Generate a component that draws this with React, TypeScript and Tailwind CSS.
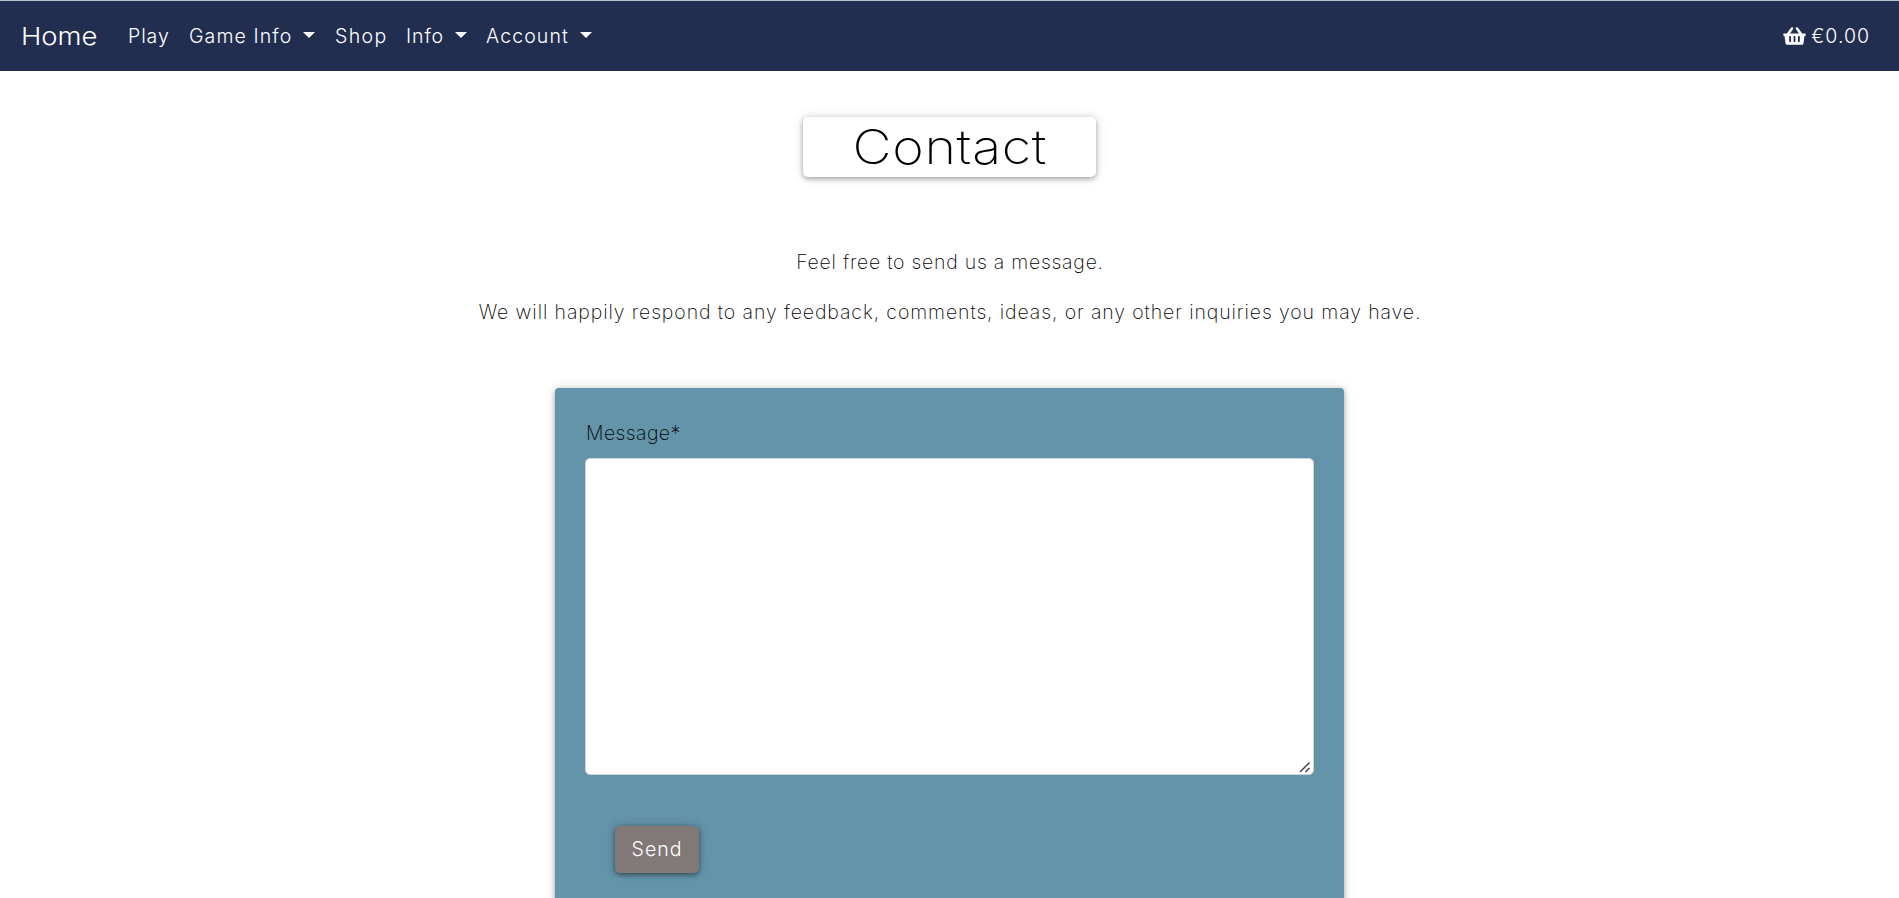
import { FaShoppingBasket } from "react-icons/fa";

function Caret() {
  return <span className="mb-[3px] ml-[11px] border-x-[6px] border-t-[6px] border-x-transparent border-t-white" />;
}

function NavItem({ label, width, spacing, menu }: { label: string; width: string; spacing: string; menu?: boolean }) {
  return (
    <a href="#" className={`flex shrink-0 items-center ${width}`}>
      <span className={`pt-[2px] whitespace-nowrap ${spacing}`}>{label}</span>
      {menu && <Caret />}
    </a>
  );
}

export default function App() {
  return (
    <div className="h-[898px] overflow-hidden bg-white font-['Inter',sans-serif] text-[19.5px] font-extralight text-black">
      <nav className="flex h-[71px] items-center border-t border-[#b4c3d4] bg-[#222e50] pr-[29px] pl-[21px] font-light text-white">
        <a href="#" className="w-[107px] shrink-0 text-[24.5px]">
          <span className="inline-block origin-left scale-x-[1.12]">Home</span>
        </a>
        <NavItem label="Play" width="w-[61px]" spacing="tracking-[0.9px]" />
        <NavItem label="Game Info" width="w-[146px]" spacing="tracking-[1.1px]" menu />
        <NavItem label="Shop" width="w-[71px]" spacing="tracking-[1.4px]" />
        <NavItem label="Info" width="w-[80px]" spacing="tracking-[0.9px]" menu />
        <NavItem label="Account" width="w-[110px]" spacing="tracking-[1.1px]" menu />
        <a href="#" className="ml-auto flex items-center gap-[5px]">
          <FaShoppingBasket className="h-[20px] w-[23px]" />
          <span className="pt-[2px] tracking-[1px]">€0.00</span>
        </a>
      </nav>
      <main className="flex flex-col items-center">
        <h1 className="mt-[46px] flex h-[60px] w-[293px] items-center justify-center rounded-[5px] text-[48px] tracking-[0.6px] shadow-[0_2px_5px_rgba(0,0,0,0.3),0_0_12px_rgba(0,0,0,0.14)]">
          <span className="inline-block scale-x-[1.12]">Contact</span>
        </h1>
        <p className="mt-[70px] h-[30px] pl-px leading-[30px] tracking-[0.75px]">Feel free to send us a message.</p>
        <p className="mt-[20px] h-[30px] pl-px leading-[30px] tracking-[0.9px]">
          We will happily respond to any feedback, comments, ideas, or any other inquiries you may have.
        </p>
        <form className="mt-[61px] h-[540px] w-[789px] rounded-[4px] bg-[#6494aa] px-[30px] pt-[30px] shadow-[0_2px_5px_rgba(0,0,0,0.3),0_0_12px_rgba(0,0,0,0.14)]">
          <label htmlFor="message" className="block h-[40px] pl-px leading-[30px] tracking-[0.4px]">Message*</label>
          <div className="relative h-[317px] w-[729px]">
            <textarea id="message" className="block h-full w-full resize-none rounded-[5px] border border-[#ced4da] bg-white" />
            <svg className="absolute right-[3px] bottom-[2px]" width="12" height="12" viewBox="0 0 12 12" stroke="#45454d" strokeWidth="1.5">
              <path d="M1 11 10.5 1.5M6.5 11 10.5 7" />
            </svg>
          </div>
          <button type="button" className="mt-[51px] ml-[30px] flex h-[47px] w-[84px] items-center justify-center rounded-[5px] bg-[#807978] font-light tracking-[1px] text-white shadow-[0_2px_5px_rgba(0,0,0,0.4),0_0_10px_rgba(0,0,0,0.2)]">
            Send
          </button>
        </form>
      </main>
    </div>
  );
}
